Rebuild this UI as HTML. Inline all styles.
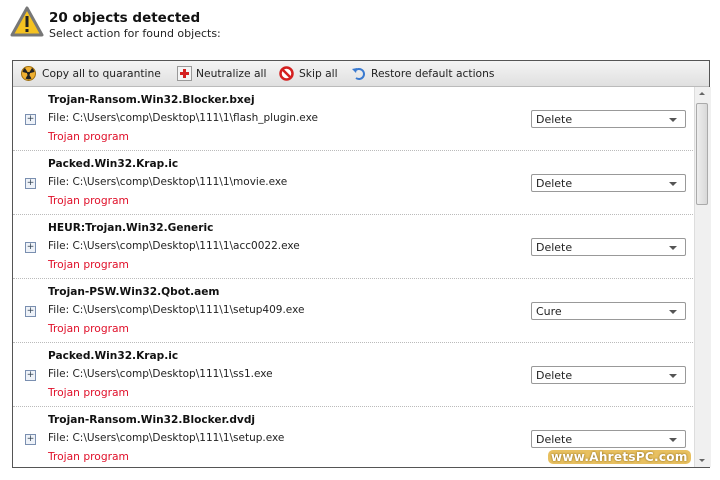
<!DOCTYPE html>
<html><head><style>
body{margin:0;width:720px;height:480px;background:#fff;font-family:"DejaVu Sans","Liberation Sans",sans-serif;font-size:11px;color:#222;position:relative;overflow:hidden}
.abs{position:absolute}
.t1{left:49px;top:10px;font-size:13.5px;font-weight:bold;color:#111}
.t2{left:49px;top:27px;font-size:11px}
.frame{left:12px;top:60px;width:698px;height:408px;border:1px solid #555;box-sizing:border-box}
.tb{left:13px;top:61px;width:696px;height:25px;background:linear-gradient(#f4f4f4,#e0e0e0);border-bottom:1px solid #bbb}
.tb span{position:absolute;top:6px;font-size:10.7px;color:#222}
.row{position:absolute;left:13px;width:680px;height:64px;border-bottom:1px dotted #bbb}
.nm{position:absolute;left:35px;top:8px;font-weight:bold;color:#111;font-size:10.6px}
.fl{position:absolute;left:35px;top:26px;font-size:10.5px}
.ty{position:absolute;left:35px;top:44px;color:#e0102a;font-size:10.7px}
.pl{position:absolute;left:12px;top:28px;width:9px;height:9px;border:1px solid #7a8fb0;background:#eef2f8;font-size:9px;line-height:9px;text-align:center;color:#345}
.dd{position:absolute;left:518px;top:24px;width:155px;height:18px;border:1px solid #999;box-sizing:border-box;background:#fff;border-radius:2px}
.dd span{position:absolute;left:4px;top:2px}
.dd i{position:absolute;right:8px;top:7px;border-left:4px solid transparent;border-right:4px solid transparent;border-top:4px solid #555}
.sb{left:694px;top:87px;width:16px;height:380px;background:#f0f0f0;border-left:1px solid #ddd}
.thumb{left:696px;top:103px;width:12px;height:102px;background:linear-gradient(90deg,#eee,#d8d8d8);border:1px solid #aaa;box-sizing:border-box;border-radius:2px}
</style></head><body>
<svg class="abs" style="left:10px;top:5px" width="34" height="34" viewBox="0 0 34 34"><path d="M17 3 L32 30 L2 30 Z" fill="#f5c221" stroke="#777" stroke-width="3" stroke-linejoin="round"/><rect x="15.5" y="11" width="3" height="11" fill="#222"/><rect x="15.5" y="24" width="3" height="3" fill="#222"/></svg>
<div class="abs t1">20 objects detected</div>
<div class="abs t2">Select action for found objects:</div>
<div class="abs frame"></div>
<div class="abs tb">
<svg style="position:absolute;left:8px;top:5px" width="15" height="15"><circle cx="7.5" cy="7.5" r="7" fill="#f0b030" stroke="#a07010"/><circle cx="7.5" cy="7.5" r="1.5" fill="#222"/><path d="M7.5 7.5 L4 2 A6 6 0 0 0 1.6 6Z M7.5 7.5 L11 2 A6 6 0 0 1 13.4 6Z M7.5 7.5 L4.5 12.5 A6 6 0 0 0 10.5 12.5Z" fill="#222"/></svg>
<span style="left:29px">Copy all to quarantine</span>
<svg style="position:absolute;left:164px;top:5px" width="15" height="15"><rect x=".5" y=".5" width="14" height="14" fill="#f4f4f4" stroke="#999"/><path d="M6 3h3v3h3v3h-3v3h-3v-3h-3v-3h3z" fill="#d42020"/></svg>
<span style="left:183px">Neutralize all</span>
<svg style="position:absolute;left:266px;top:5px" width="15" height="15"><circle cx="7.5" cy="7.5" r="6" fill="#fff" stroke="#d42020" stroke-width="2.5"/><path d="M3.5 3.5L11.5 11.5" stroke="#d42020" stroke-width="2.5"/></svg>
<span style="left:286px">Skip all</span>
<svg style="position:absolute;left:338px;top:5px" width="15" height="15"><path d="M4 5 A5 5 0 1 1 5 12" fill="none" stroke="#3a7ad0" stroke-width="2"/><path d="M1 3 L6 2 L5 7Z" fill="#3a7ad0"/></svg>
<span style="left:358px">Restore default actions</span>
</div>
<div class="row" style="top:86px"><div class="nm">Trojan-Ransom.Win32.Blocker.bxej</div><div class="pl">+</div><div class="fl">File: C:\Users\comp\Desktop\111\1\flash_plugin.exe</div><div class="ty">Trojan program</div><div class="dd"><span>Delete</span><i></i></div></div>
<div class="row" style="top:150px"><div class="nm">Packed.Win32.Krap.ic</div><div class="pl">+</div><div class="fl">File: C:\Users\comp\Desktop\111\1\movie.exe</div><div class="ty">Trojan program</div><div class="dd"><span>Delete</span><i></i></div></div>
<div class="row" style="top:214px"><div class="nm">HEUR:Trojan.Win32.Generic</div><div class="pl">+</div><div class="fl">File: C:\Users\comp\Desktop\111\1\acc0022.exe</div><div class="ty">Trojan program</div><div class="dd"><span>Delete</span><i></i></div></div>
<div class="row" style="top:278px"><div class="nm">Trojan-PSW.Win32.Qbot.aem</div><div class="pl">+</div><div class="fl">File: C:\Users\comp\Desktop\111\1\setup409.exe</div><div class="ty">Trojan program</div><div class="dd"><span>Cure</span><i></i></div></div>
<div class="row" style="top:342px"><div class="nm">Packed.Win32.Krap.ic</div><div class="pl">+</div><div class="fl">File: C:\Users\comp\Desktop\111\1\ss1.exe</div><div class="ty">Trojan program</div><div class="dd"><span>Delete</span><i></i></div></div>
<div class="row" style="top:406px;border:none"><div class="nm">Trojan-Ransom.Win32.Blocker.dvdj</div><div class="pl">+</div><div class="fl">File: C:\Users\comp\Desktop\111\1\setup.exe</div><div class="ty">Trojan program</div><div class="dd"><span>Delete</span><i></i></div></div>
<div class="abs sb"></div>
<div class="abs thumb"></div>
<div class="abs" style="left:699px;top:92px;border-left:3px solid transparent;border-right:3px solid transparent;border-bottom:3px solid #666"></div>
<div class="abs" style="left:699px;top:459px;border-left:3px solid transparent;border-right:3px solid transparent;border-top:3px solid #666"></div>
<div class="abs" style="left:548px;top:450px;font-weight:bold;font-size:12px;color:#fff;background:#e8c060;border-radius:5px;padding:0 3px;letter-spacing:0.3px;text-shadow:0 0 2px #7a5a10">www.AhretsPC.com</div>
</body></html>
